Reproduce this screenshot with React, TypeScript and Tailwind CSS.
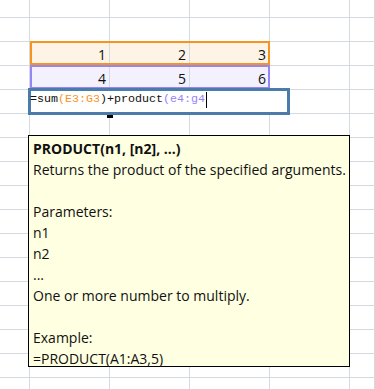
import React from "react";

const COL_COUNT = 6;
const ROW_COUNT = 17;

const values: Record<string, string> = {
  "2-1": "1",
  "2-2": "2",
  "2-3": "3",
  "3-1": "4",
  "3-2": "5",
  "3-3": "6",
};

function cellBg(row: number, col: number) {
  if (col >= 1 && col <= 3) {
    if (row === 2) return "bg-[#fdf3e7]";
    if (row === 3) return "bg-[#f3f1fd]";
  }
  return "bg-white";
}

const helpLines = [
  "Returns the product of the specified arguments.",
  "",
  "Parameters:",
  "n1",
  "n2",
  "...",
  "One or more number to multiply.",
  "",
  "Example:",
  "=PRODUCT(A1:A3,5)",
];

export default function App() {
  const cells = [];
  for (let r = 0; r < ROW_COUNT; r++) {
    for (let c = 0; c < COL_COUNT; c++) {
      cells.push(
        <div
          key={`${r}-${c}`}
          className={`flex items-center justify-end overflow-hidden border-b border-r border-[#d5d9e0] pr-[3px] pt-[2px] text-[14px] text-[#111] ${cellBg(r, c)}`}
        >
          {values[`${r}-${c}`]}
        </div>,
      );
    }
  }

  return (
    <div
      className="relative h-[389px] w-[375px] overflow-hidden bg-white"
      style={{ fontFamily: '"Open Sans", "Noto Sans", sans-serif' }}
    >
      <div className="grid grid-cols-[30px_repeat(4,80px)_25px] grid-rows-[18px_repeat(16,24px)]">
        {cells}
      </div>

      {/* referenced ranges */}
      <div className="pointer-events-none absolute left-[30px] top-[41px] h-[24px] w-[240px] border-2 border-[#f7941d]" />
      <div className="pointer-events-none absolute left-[30px] top-[65px] h-[24px] w-[240px] border-2 border-[#9585f5]" />

      {/* fill handle */}
      <div className="absolute left-[107px] top-[112px] h-[6px] w-[6px] bg-black" />

      {/* cell editor */}
      <div className="absolute left-[28px] top-[88px] flex h-[27px] w-[262px] items-start border-[3px] border-[#4a7bab] bg-white">
        <div
          className="ml-[-1px] flex items-center whitespace-pre text-[11.67px] leading-[17px] text-[#111]"
          style={{ fontFamily: '"Liberation Mono", monospace' }}
        >
          <span>=sum</span>
          <span className="text-[#f7941d]">(E3:G3</span>
          <span>)+product</span>
          <span className="text-[#9585f5]">(e4:g4</span>
          <span className="ml-px inline-block h-[16px] w-px bg-black" />
        </div>
      </div>

      {/* function help */}
      <div className="absolute left-[28px] top-[135px] h-[232px] w-[322px] border border-black bg-[#ffffe1] px-[4px] pt-[2px] text-[14px] leading-[21px] text-[#111]">
        <div className="font-bold">PRODUCT(n1, [n2], ...)</div>
        {helpLines.map((line, i) => (
          <div key={i} className="h-[21px] whitespace-nowrap">
            {line}
          </div>
        ))}
      </div>
    </div>
  );
}
